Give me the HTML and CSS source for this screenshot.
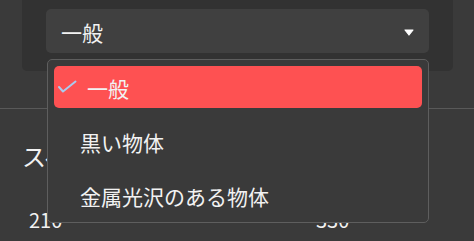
FILE: index.html
```html
<!DOCTYPE html>
<html lang="ja">
<head>
<meta charset="utf-8">
<link rel="stylesheet" href="styles.css">
</head>
<body>
<div class="page">
  <div class="card">
    <div class="select">
      <span class="select-value">一般</span>
      <svg class="caret" width="10" height="7" viewBox="0 0 10 7"><path d="M1 1 H9 L5 6 Z" fill="#ffffff" stroke="#ffffff" stroke-width="1.2" stroke-linejoin="round"/></svg>
    </div>
  </div>
  <div class="divider"></div>
  <div class="section">
    <h2 class="section-title">スペキュラー強度</h2>
    <div class="values">
      <span class="value">210</span>
      <span class="value">330</span>
    </div>
  </div>
  <ul class="menu">
    <li class="menu-item selected">
      <svg class="check" width="22" height="16" viewBox="0 0 22 16"><path d="M3 8 L7 12.5 L19.5 2.5" fill="none" stroke="#abcbee" stroke-width="2" stroke-linecap="round" stroke-linejoin="round"/></svg>
      <span>一般</span>
    </li>
    <li class="menu-item"><span>黒い物体</span></li>
    <li class="menu-item"><span>金属光沢のある物体</span></li>
  </ul>
</div>
</body>
</html>
```
FILE: styles.css
```css
* { box-sizing: border-box; }
html, body {
  margin: 0;
  padding: 0;
  background: #3a3a3a;
}
body {
  width: 474px;
  height: 241px;
  overflow: hidden;
  font-family: "Noto Sans CJK JP", "Noto Sans", sans-serif;
  color: #f2f2f2;
}
.page {
  position: relative;
  width: 474px;
  height: 241px;
  display: flex;
  flex-direction: column;
}
.card {
  margin: 0 21px 0 22px;
  padding: 9px 24px 18px 24px;
  background: #323232;
  border-radius: 0 0 5px 5px;
}
.select {
  height: 44px;
  background: #404040;
  border-radius: 5px;
  display: flex;
  align-items: center;
  justify-content: space-between;
  padding: 0 15px 0 15px;
}
.select-value {
  font-size: 21px;
  line-height: 1;
  margin-top: 2px;
}
.caret {
  display: block;
  margin-top: 2px;
}
.divider {
  margin-top: 37px;
  height: 1px;
  background: #595959;
}
.section {
  padding: 0 22px;
}
.section-title {
  margin: 30px 0 0 0;
  font-size: 24px;
  font-weight: 400;
  line-height: 34px;
  white-space: nowrap;
}
.values {
  display: grid;
  grid-template-columns: 287px 1fr;
  padding-left: 7px;
  margin-top: 35px;
  font-size: 20px;
  line-height: 24px;
}
.menu {
  position: absolute;
  left: 47px;
  top: 59px;
  width: 382px;
  height: 164px;
  margin: 0;
  padding: 0;
  list-style: none;
  background: #3a3a3a;
  border: 1px solid #5e5e5e;
  border-radius: 5px;
  display: flex;
  flex-direction: column;
}
.menu-item {
  height: 42px;
  flex: 0 0 42px;
  margin: 6px;
  display: flex;
  align-items: center;
  padding-left: 26px;
  font-size: 21px;
  line-height: 1;
  border-radius: 5px;
}
.menu-item span {
  margin-top: 2px;
}
.menu-item.selected {
  background: #fe5152;
  padding-left: 2px;
  gap: 9px;
}
.check {
  display: block;
}
```
